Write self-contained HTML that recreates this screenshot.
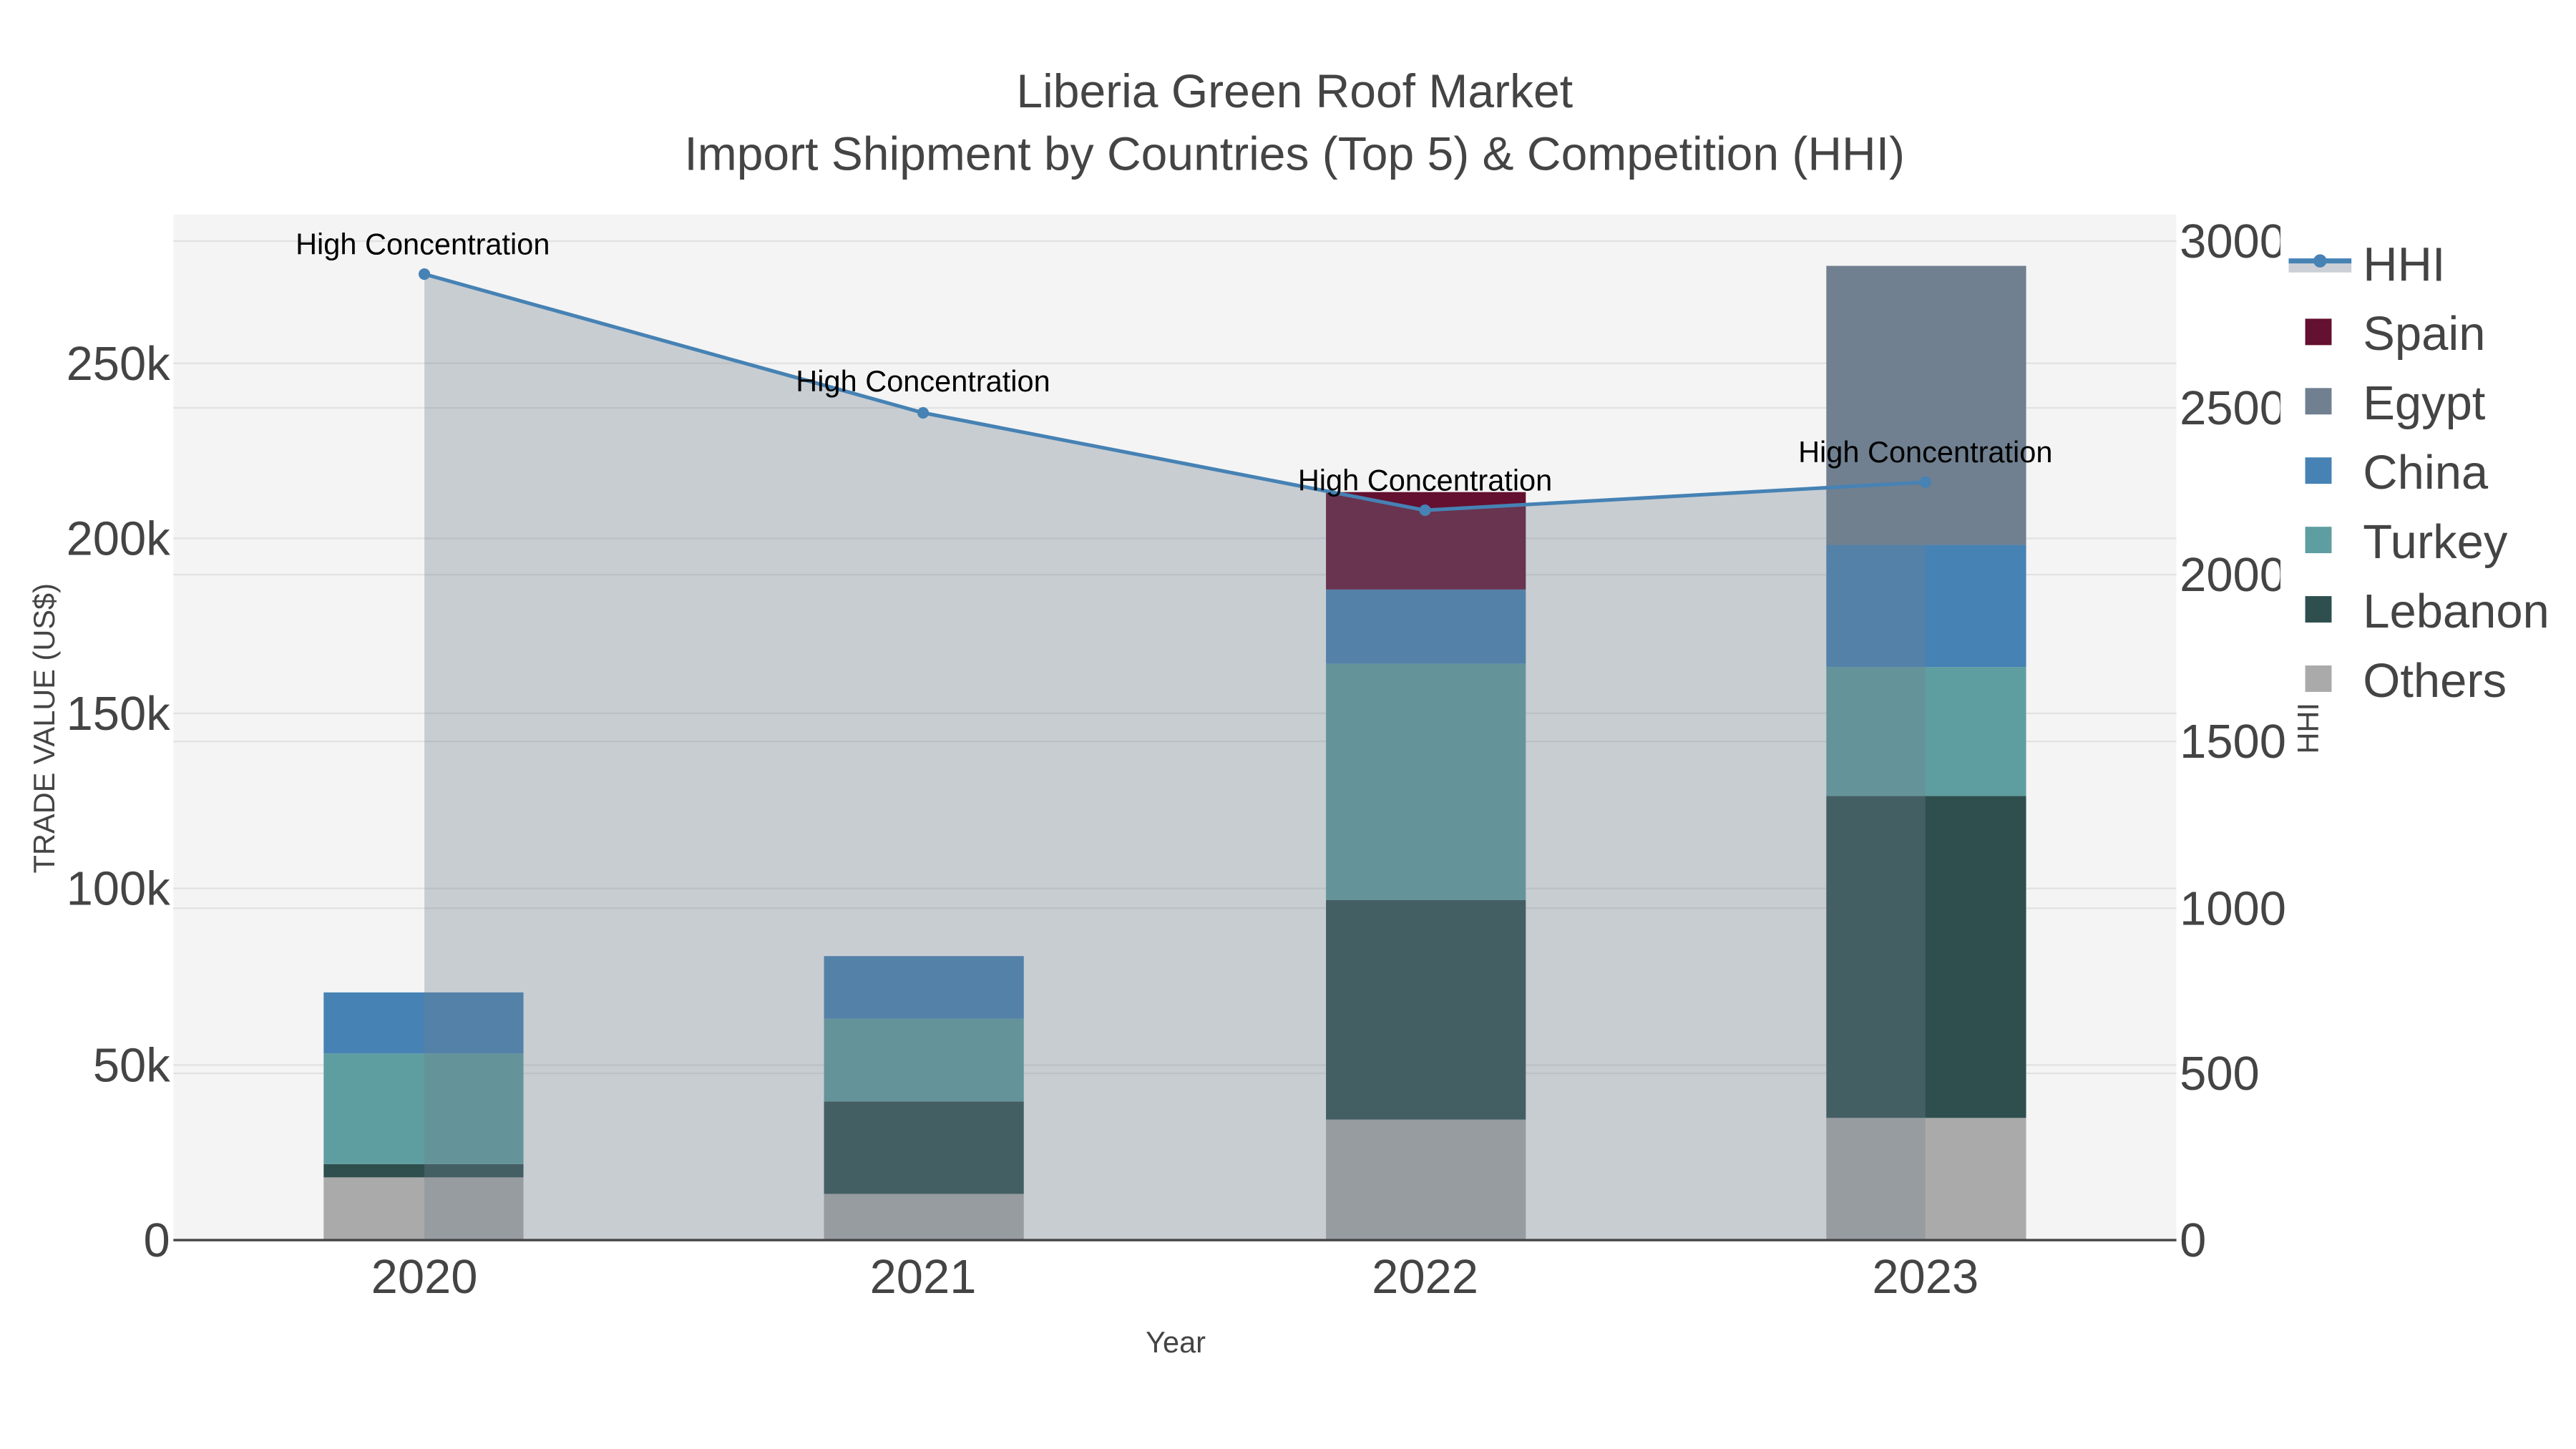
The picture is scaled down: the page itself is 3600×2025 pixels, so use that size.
<!DOCTYPE html>
<html><head><meta charset="utf-8"><style>html,body{margin:0;padding:0;background:#fff}svg{display:block}</style></head>
<body>
<svg width="3600" height="2025" viewBox="0 0 1560 877.5" xmlns="http://www.w3.org/2000/svg" font-family="Liberation Sans, sans-serif">
<rect width="1560" height="877.5" fill="#fff"/>
<rect x="105" y="130" width="1213" height="621" fill="#f4f4f4"/>
<g stroke="#e2e2e2" stroke-width="1">
<line x1="105" x2="1318" y1="645" y2="645"/><line x1="105" x2="1318" y1="538" y2="538"/><line x1="105" x2="1318" y1="432" y2="432"/><line x1="105" x2="1318" y1="326" y2="326"/><line x1="105" x2="1318" y1="220" y2="220"/>
<line x1="105" x2="1318" y1="650" y2="650"/><line x1="105" x2="1318" y1="550" y2="550"/><line x1="105" x2="1318" y1="449" y2="449"/><line x1="105" x2="1318" y1="348" y2="348"/><line x1="105" x2="1318" y1="247" y2="247"/><line x1="105" x2="1318" y1="146" y2="146"/>
</g>
<g>
<rect x="196" y="713" width="121" height="38" fill="#aaaaaa"/>
<rect x="196" y="705" width="121" height="8" fill="#2f4f4f"/>
<rect x="196" y="638" width="121" height="67" fill="#5f9ea0"/>
<rect x="196" y="601" width="121" height="37" fill="#4682b4"/>
<rect x="499" y="723" width="121" height="28" fill="#aaaaaa"/>
<rect x="499" y="667" width="121" height="56" fill="#2f4f4f"/>
<rect x="499" y="617" width="121" height="50" fill="#5f9ea0"/>
<rect x="499" y="579" width="121" height="38" fill="#4682b4"/>
<rect x="803" y="678" width="121" height="73" fill="#aaaaaa"/>
<rect x="803" y="545" width="121" height="133" fill="#2f4f4f"/>
<rect x="803" y="402" width="121" height="143" fill="#5f9ea0"/>
<rect x="803" y="357" width="121" height="45" fill="#4682b4"/>
<rect x="803" y="298" width="121" height="59" fill="#641030"/>
<rect x="1106" y="677" width="121" height="74" fill="#aaaaaa"/>
<rect x="1106" y="482" width="121" height="195" fill="#2f4f4f"/>
<rect x="1106" y="404" width="121" height="78" fill="#5f9ea0"/>
<rect x="1106" y="330" width="121" height="74" fill="#4682b4"/>
<rect x="1106" y="161" width="121" height="169" fill="#708090"/>
</g>
<polygon points="257,166 559,250 863,309 1166,292 1166,751 257,751" fill="rgba(112,128,144,0.33)"/>
<polyline points="257,166 559,250 863,309 1166,292" fill="none" stroke="#4682b4" stroke-width="2.2"/>
<g fill="#4682b4"><circle cx="257" cy="166" r="3.5"/><circle cx="559" cy="250" r="3.5"/><circle cx="863" cy="309" r="3.5"/><circle cx="1166" cy="292" r="3.5"/></g>
<line x1="105" x2="1318" y1="751" y2="751" stroke="#444" stroke-width="1.5"/>
<g font-size="18" fill="#000" text-anchor="middle">
<text x="256" y="154">High Concentration</text><text x="559" y="237">High Concentration</text><text x="863" y="297">High Concentration</text><text x="1166" y="280">High Concentration</text>
</g>
<g font-size="29" fill="#444" text-anchor="end">
<text x="103" y="761">0</text><text x="103" y="655">50k</text><text x="103" y="548">100k</text><text x="103" y="442">150k</text><text x="103" y="336">200k</text><text x="103" y="230">250k</text>
</g>
<g font-size="29" fill="#444">
<text x="1320" y="761">0</text><text x="1320" y="660">500</text><text x="1320" y="560">1000</text><text x="1320" y="459">1500</text><text x="1320" y="358">2000</text><text x="1320" y="257">2500</text><text x="1320" y="156">3000</text>
</g>
<rect x="1381" y="120" width="179" height="320" fill="#fff"/>
<g font-size="29" fill="#444" text-anchor="middle">
<text x="257" y="783">2020</text><text x="559" y="783">2021</text><text x="863" y="783">2022</text><text x="1166" y="783">2023</text>
</g>
<text x="712" y="819" font-size="18" fill="#444" text-anchor="middle">Year</text>
<text transform="translate(33,441) rotate(-90)" font-size="18" fill="#444" text-anchor="middle">TRADE VALUE (US$)</text>
<text transform="translate(1404,441) rotate(-90)" font-size="18" fill="#444" text-anchor="middle">HHI</text>
<g font-size="28.6" fill="#444" text-anchor="middle">
<text x="784" y="65">Liberia Green Roof Market</text>
<text x="784" y="103">Import Shipment by Countries (Top 5) &amp; Competition (HHI)</text>
</g>
<rect x="1386" y="159" width="38" height="6" fill="#ccd0d6"/>
<line x1="1386" x2="1424" y1="158" y2="158" stroke="#4682b4" stroke-width="3"/>
<circle cx="1405" cy="158" r="4" fill="#4682b4"/>
<rect x="1396" y="193" width="16" height="16" fill="#641030"/>
<rect x="1396" y="235" width="16" height="16" fill="#708090"/>
<rect x="1396" y="277" width="16" height="16" fill="#4682b4"/>
<rect x="1396" y="319" width="16" height="16" fill="#5f9ea0"/>
<rect x="1396" y="361" width="16" height="16" fill="#2f4f4f"/>
<rect x="1396" y="403" width="16" height="16" fill="#aaaaaa"/>
<g font-size="29" fill="#444">
<text x="1431" y="170">HHI</text><text x="1431" y="212">Spain</text><text x="1431" y="254">Egypt</text><text x="1431" y="296">China</text><text x="1431" y="338">Turkey</text><text x="1431" y="380">Lebanon</text><text x="1431" y="422">Others</text>
</g>
</svg>
</body></html>
